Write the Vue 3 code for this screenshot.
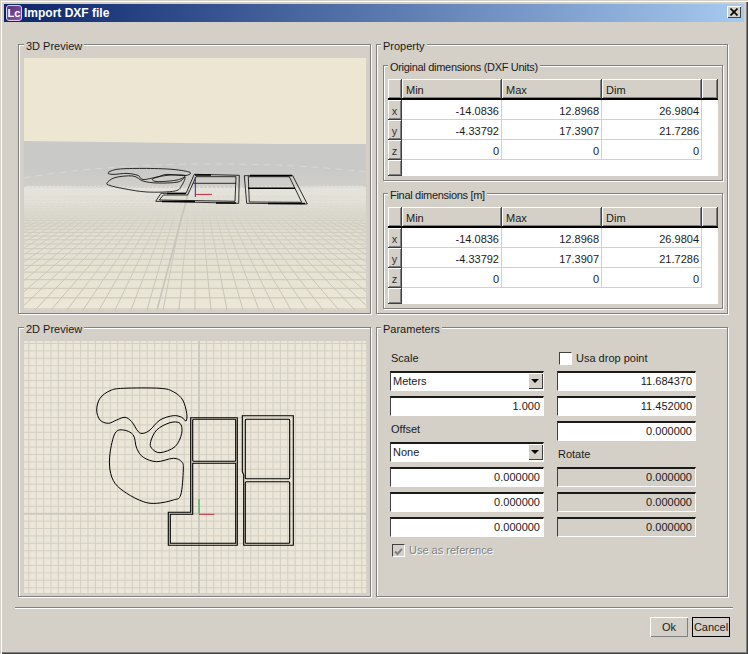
<template>
  <div class="window">
    <div class="titlebar">
      <span class="app-icon">Lc</span>
      <span class="title">Import DXF file</span>
      <button class="close-btn">
        <svg width="8" height="8" viewBox="0 0 8 8"><path d="M0.5 0.5L7.5 7.5M7.5 0.5L0.5 7.5" stroke="#000" stroke-width="1.6" /></svg>
      </button>
    </div>

    <div class="body">
      <div class="panels">
        <!-- 3D preview -->
        <div class="group">
          <span class="legend">3D Preview</span>
          <svg class="canvas" viewBox="24 58 342 252" preserveAspectRatio="none">
            <defs>
              <linearGradient id="floor" gradientUnits="userSpaceOnUse" x1="0" y1="141" x2="0" y2="310">
                <stop offset="0" stop-color="#c9c9c8" />
                <stop offset="0.16" stop-color="#c9c9c8" />
                <stop offset="0.32" stop-color="#d3d1ca" />
                <stop offset="0.55" stop-color="#e2ded0" />
                <stop offset="1" stop-color="#ece7d6" />
              </linearGradient>
              <linearGradient id="gridline" gradientUnits="userSpaceOnUse" x1="0" y1="170" x2="0" y2="300">
                <stop offset="0" stop-color="#e6e5e0" />
                <stop offset="0.25" stop-color="#e4e2d8" />
                <stop offset="0.42" stop-color="#cfccc1" />
                <stop offset="1" stop-color="#c6c3b8" />
              </linearGradient>
            </defs>
            <rect x="24" y="58" width="342" height="252" fill="#ece6d3" />
            <path d="M24 141L105 142L180 143L280 144L366 144V310H24Z" fill="url(#floor)" />
            <path v-for="(d, i) in floorLines" :key="i" :d="d" stroke="url(#gridline)" stroke-width="1" fill="none" />
            <path d="M157 310L189 190" stroke="#c6c4bb" stroke-width="1.6" fill="none" />
            <path d="M24 178Q100 165 195 164T366 172" stroke="#dcdbd5" stroke-width="0.8" stroke-dasharray="7 5" fill="none" />
            <g fill="none" stroke="#000" stroke-width="0.8">
              <path :d="smooth(blob3dA)" />
              <path :d="smooth(blob3dB)" />
              <path :d="smooth(blob3dC)" />
              <path d="M155.7 201.3L161 193.3H186L194.3 174.3L239.3 175.3L238.7 203.3Z" />
              <path d="M159.3 200L163.3 195H187.7L196 176.7H236L235 201.3Z" />
              <path d="M193.3 183.3H236" />
              <path d="M244.3 175.7H292.7L307.3 204L246.7 203.3Z" />
              <path d="M248.3 176.7H289.3L301.7 202.3L249.3 202Z" />
            </g>
            <g fill="none" stroke="#000" stroke-width="1.6">
              <path d="M195 175H211M162 201.5H195M216 203H236M167 193.5H186" />
              <path d="M250 175.5H292M248 188.2H295M268 203.5H305" />
            </g>
            <path d="M195.3 177V197" stroke="#2a2aa8" stroke-width="1" />
            <path d="M195.3 194.4H212" stroke="#c8283c" stroke-width="1" />
          </svg>
        </div>

        <!-- Dimension tables -->
        <div class="group property">
          <span class="legend">Property</span>
          <div v-for="dim in dimensions" :key="dim.title" class="group inner">
            <span class="legend">{{ dim.title }}</span>
            <div class="table">
              <div class="head-cell"></div>
              <div v-for="col in columns" :key="col" class="head-cell col">{{ col }}</div>
              <div class="head-cell"></div>
              <template v-for="row in dim.rows" :key="row.axis">
                <div class="head-cell axis">{{ row.axis }}</div>
                <div v-for="(v, i) in row.values" :key="i" class="cell">{{ v }}</div>
                <div class="blank"></div>
              </template>
              <div class="head-cell"></div>
              <div class="blank wide"></div>
            </div>
          </div>
        </div>

        <!-- 2D preview -->
        <div class="group">
          <span class="legend">2D Preview</span>
          <svg class="canvas" viewBox="24 341 342 252" preserveAspectRatio="none">
            <rect x="24" y="341" width="342" height="252" fill="#ece6d8" />
            <path v-for="(d, i) in planLines" :key="i" :d="d" stroke="#d2cfc4" stroke-width="1" fill="none" />
            <path d="M199 341V593M24 513.7H366" stroke="#cbc9c0" stroke-width="2" fill="none" />
            <g fill="none" stroke="#000" stroke-width="1">
              <path :d="smooth(blobTop)" />
              <path :d="smooth(blobEye)" />
              <path :d="smooth(blobLow)" />
            </g>
            <g fill="none" stroke="#000" stroke-width="1.1">
              <path d="M190.7 417.7H237.3V545.3H168.3V512.3H190.7Z" />
              <path d="M192.7 463.3H235.7V543.3H170.3V514.3H192.7Z" />
              <rect x="192.7" y="419.3" width="43" height="42" rx="1" />
              <path d="M242.3 415.7H293.3V545.3H243.7V475L242.3 471.7Z" />
              <rect x="245.3" y="419.3" width="44.4" height="59.4" rx="1" />
              <rect x="245.3" y="481.7" width="44.4" height="61.6" rx="1" />
            </g>
            <path d="M199 499V514" stroke="#1fb03c" stroke-width="1" />
            <path d="M199 514.3H214.3" stroke="#c8283c" stroke-width="1" />
          </svg>
        </div>

        <!-- Parameters -->
        <div class="group params">
          <span class="legend">Parameters</span>
          <div class="param-col left">
            <div class="label">Scale</div>
            <div class="field combo">Meters<span class="arrow"></span></div>
            <div class="field">1.000</div>
            <div class="label">Offset</div>
            <div class="field combo">None<span class="arrow"></span></div>
            <div v-for="(v, i) in offsets" :key="i" class="field">{{ v }}</div>
            <div class="label check-row disabled">
              <span class="checkbox off">
                <svg width="11" height="11" viewBox="0 0 11 11"><path d="M2 5.5L4.5 8L9 2.8" stroke="#808080" stroke-width="2" fill="none" /></svg>
              </span>
              Use as reference
            </div>
          </div>
          <div class="param-col right">
            <div class="label check-row"><span class="checkbox"></span>Usa drop point</div>
            <div v-for="(v, i) in dropPoint" :key="i" class="field">{{ v }}</div>
            <div class="label">Rotate</div>
            <div v-for="(v, i) in rotate" :key="i" class="field readonly">{{ v }}</div>
          </div>
        </div>
      </div>

      <div class="separator"></div>

      <div class="footer">
        <button class="btn">Ok</button>
        <button class="btn default">Cancel</button>
      </div>
    </div>
  </div>
</template>

<script setup>
const columns = ['Min', 'Max', 'Dim']
const rows = [
  { axis: 'x', values: ['-14.0836', '12.8968', '26.9804'] },
  { axis: 'y', values: ['-4.33792', '17.3907', '21.7286'] },
  { axis: 'z', values: ['0', '0', '0'] },
]
const dimensions = [
  { title: 'Original dimensions (DXF Units)', rows },
  { title: 'Final dimensions [m]', rows },
]
const offsets = ['0.000000', '0.000000', '0.000000']
const dropPoint = ['11.684370', '11.452000', '0.000000']
const rotate = ['0.000000', '0.000000', '0.000000']

// closed catmull-rom through the traced points
function smooth(pts) {
  const n = pts.length
  let d = `M${pts[0][0]} ${pts[0][1]}`
  for (let i = 0; i < n; i++) {
    const p0 = pts[(i - 1 + n) % n]
    const p1 = pts[i]
    const p2 = pts[(i + 1) % n]
    const p3 = pts[(i + 2) % n]
    const c1 = [p1[0] + (p2[0] - p0[0]) / 6, p1[1] + (p2[1] - p0[1]) / 6]
    const c2 = [p2[0] - (p3[0] - p1[0]) / 6, p2[1] - (p3[1] - p1[1]) / 6]
    d += `C${c1[0].toFixed(1)} ${c1[1].toFixed(1)} ${c2[0].toFixed(1)} ${c2[1].toFixed(1)} ${p2[0]} ${p2[1]}`
  }
  return d + 'Z'
}

const blobTop = [[186, 421], [186.7, 413.3], [182.7, 400], [173.3, 391.7], [160, 388.3], [123.3, 388.3], [110, 390.7], [100, 398.3], [96.7, 410], [100, 420], [108.3, 423.3], [116.7, 420], [125, 417.3], [131.7, 421.7], [138.3, 431.7], [143.3, 433.3], [150, 430], [160, 420], [173.3, 415.7], [181.7, 417.3]]
const blobEye = [[180, 423.3], [181.7, 433.3], [175, 446.7], [160, 452.7], [151.7, 448.3], [150.7, 441.7], [156.7, 430], [170, 422.7]]
const blobLow = [[115, 433.3], [123.3, 430], [133.3, 435], [136.7, 448.3], [143.3, 457.3], [156.7, 461.7], [173.3, 458.3], [181.7, 461.7], [183.3, 470], [180.7, 495], [173.3, 500], [156.7, 503.3], [143.3, 501.7], [126.7, 493.3], [115, 483.3], [110, 470], [110, 453.3]]
const blob3dA = [[108, 172.7], [118, 169.2], [143, 168.4], [173, 169.4], [190, 172.4], [185, 175.6], [167, 174.4], [157, 177], [143, 179.5], [138, 175.4], [127, 173.4], [113, 174.4]]
const blob3dB = [[107, 183], [115, 177.6], [133, 176], [143, 181], [157, 183], [178, 182], [185, 177], [182, 185], [175, 191], [147, 192], [123, 188.5], [110, 185.5]]
const blob3dC = [[153, 178.6], [167, 175.4], [185, 175.4], [177, 180], [157, 181.6]]

// 3D floor: rows shrink towards the horizon, columns meet at the vanishing point
const horizon = 143
const vanishX = 195
const floorLines = []
for (let n = 14; n < 52; n++) {
  const y = horizon + 2324 / n
  floorLines.push(`M24 ${y.toFixed(1)}H366`)
}
for (let i = -40; i <= 40; i++) {
  const xb = vanishX + i * 16
  const yTop = 186
  const xt = vanishX + (i * 16 * (yTop - horizon)) / 167
  floorLines.push(`M${xb} 310L${xt.toFixed(1)} ${yTop}`)
}

// 2D plan grid, spaced out from the axes
const step = 7.4
const planLines = []
for (let k = -24; k <= 24; k++) {
  planLines.push(`M${(199 + k * step).toFixed(1)} 341V593`)
  planLines.push(`M24 ${(513.7 + k * step).toFixed(1)}H366`)
}
</script>

<style>
body { background: #d4d0c8; }
</style>

<style scoped>
.window {
  width: 748px;
  height: 654px;
  box-sizing: border-box;
  padding: 4px;
  background: #d4d0c8;
  box-shadow: inset 1px 1px 0 #d4d0c8, inset 2px 2px 0 #fff, inset -1px -1px 0 #404040, inset -2px -2px 0 #808080;
  font-family: "Liberation Sans", Arial, sans-serif;
  font-size: 11px;
  color: #1a1a1a;
}

.titlebar {
  height: 18px;
  display: flex;
  align-items: center;
  position: relative;
  background: linear-gradient(90deg, #0a246a, #a6caf0);
}
.app-icon {
  width: 16px;
  height: 16px;
  margin-left: 2px;
  box-sizing: border-box;
  border: 1px solid #e3c9ef;
  border-radius: 3px;
  background: linear-gradient(135deg, #54307a, #8a5aa8);
  color: #fff;
  font-weight: bold;
  font-size: 11px;
  line-height: 14px;
  text-align: center;
}
.title {
  margin-left: 2px;
  color: #fff;
  font-weight: bold;
  font-size: 12px;
}
.close-btn {
  position: absolute;
  right: 3px;
  top: 2px;
  width: 14px;
  height: 12px;
  padding: 0;
  border: none;
  background: #d4d0c8;
  box-shadow: inset 1px 1px 0 #fff, inset -1px -1px 0 #404040;
  display: flex;
  align-items: center;
  justify-content: center;
}

.body { padding: 22px 11px 0; }

.panels {
  padding: 0 5px 0 3px;
  display: grid;
  grid-template-columns: 353px 352px;
  grid-template-rows: 270px 270px;
  column-gap: 5px;
  row-gap: 13px;
}

.group {
  position: relative;
  box-sizing: border-box;
  display: flex;
  flex-direction: column;
  padding: 13px 4px 3px 5px;
  border: 1px solid #808080;
  box-shadow: inset 1px 1px 0 #fff, 1px 1px 0 #fff;
}
.legend {
  position: absolute;
  top: -6px;
  left: 5px;
  padding: 0 2px;
  line-height: 14px;
  background: #d4d0c8;
  white-space: nowrap;
}
.property > .legend,
.params > .legend { left: 4px; }
.canvas {
  display: block;
  width: 342px;
  height: 252px;
}

.property {
  padding: 20px 4px 0 6px;
  gap: 12px;
}
.inner {
  height: 116px;
  padding: 13px 4px 4px 4px;
}
.inner .legend {
  left: 4px;
  letter-spacing: -0.3px;
}

.table {
  display: grid;
  grid-template-columns: 14px 100px 100px 100px 16px;
  grid-template-rows: 21px 20px 20px 20px 16px;
  background: #fff;
}
.head-cell {
  box-sizing: border-box;
  background: #d4d0c8;
  border-right: 1px solid #404040;
  border-bottom: 1px solid #404040;
  box-shadow: inset 1px 1px 0 #fff, inset -1px -1px 0 #808080;
}
.head-cell.col {
  padding: 1px 0 0 4px;
  line-height: 20px;
}
.table > .head-cell:nth-child(-n+5) {
  border-bottom: 2px solid #000;
}
.head-cell.axis {
  padding-top: 2px;
  text-align: center;
  line-height: 19px;
  color: #333;
}
.cell {
  box-sizing: border-box;
  padding: 2px 2px 0 0;
  text-align: right;
  line-height: 19px;
  border-right: 1px solid #d4d0c8;
  border-bottom: 1px solid #d4d0c8;
}
.blank { background: #fff; }
.blank.wide { grid-column: span 4; }

.params {
  flex-direction: row;
  align-items: flex-start;
  padding: 22px 0 0 13px;
  gap: 13px;
}
.param-col {
  display: flex;
  flex-direction: column;
  gap: 5px;
}
.param-col.left { width: 154px; }
.param-col.right { width: 139px; }
.label {
  height: 16px;
  line-height: 16px;
  padding-left: 1px;
}
.check-row {
  display: flex;
  align-items: center;
  gap: 4px;
  padding-left: 2px;
}
.checkbox {
  width: 11px;
  height: 11px;
  flex: none;
  display: block;
  background: #fff;
  border-top: 1px solid #404040;
  border-left: 1px solid #404040;
  border-right: 1px solid #fff;
  border-bottom: 1px solid #fff;
}
.checkbox.off { background: #d4d0c8; }
.disabled {
  color: #808080;
  text-shadow: 1px 1px 0 #fff;
}
.field {
  position: relative;
  box-sizing: border-box;
  height: 20px;
  padding-right: 3px;
  text-align: right;
  line-height: 16px;
  background: #fff;
  border-top: 2px solid #1a1a1a;
  border-left: 1px solid #404040;
  border-right: 1px solid #fff;
  border-bottom: 1px solid #fff;
}
.field.combo {
  text-align: left;
  padding-left: 2px;
}
.field.readonly { background: #d4d0c8; }
.arrow {
  position: absolute;
  right: 0;
  top: 0;
  width: 15px;
  height: 16px;
  background: #d4d0c8;
  box-shadow: inset 1px 1px 0 #fff, inset -1px -1px 0 #404040;
}
.arrow::after {
  content: "";
  position: absolute;
  left: 3px;
  top: 6px;
  border-left: 4px solid transparent;
  border-right: 4px solid transparent;
  border-top: 4px solid #000;
}

.separator {
  height: 1px;
  margin-top: 10px;
  background: #808080;
  border-bottom: 1px solid #fff;
}

.footer {
  display: flex;
  justify-content: flex-end;
  gap: 4px;
  margin-top: 8px;
  padding-right: 3px;
}
.btn {
  width: 38px;
  height: 20px;
  padding: 0;
  font: inherit;
  color: inherit;
  background: #d4d0c8;
  border: none;
  box-shadow: inset 1px 1px 0 #fff, inset -1px -1px 0 #808080;
}
.btn.default {
  border: 1px solid #000;
  box-shadow: none;
}
</style>
